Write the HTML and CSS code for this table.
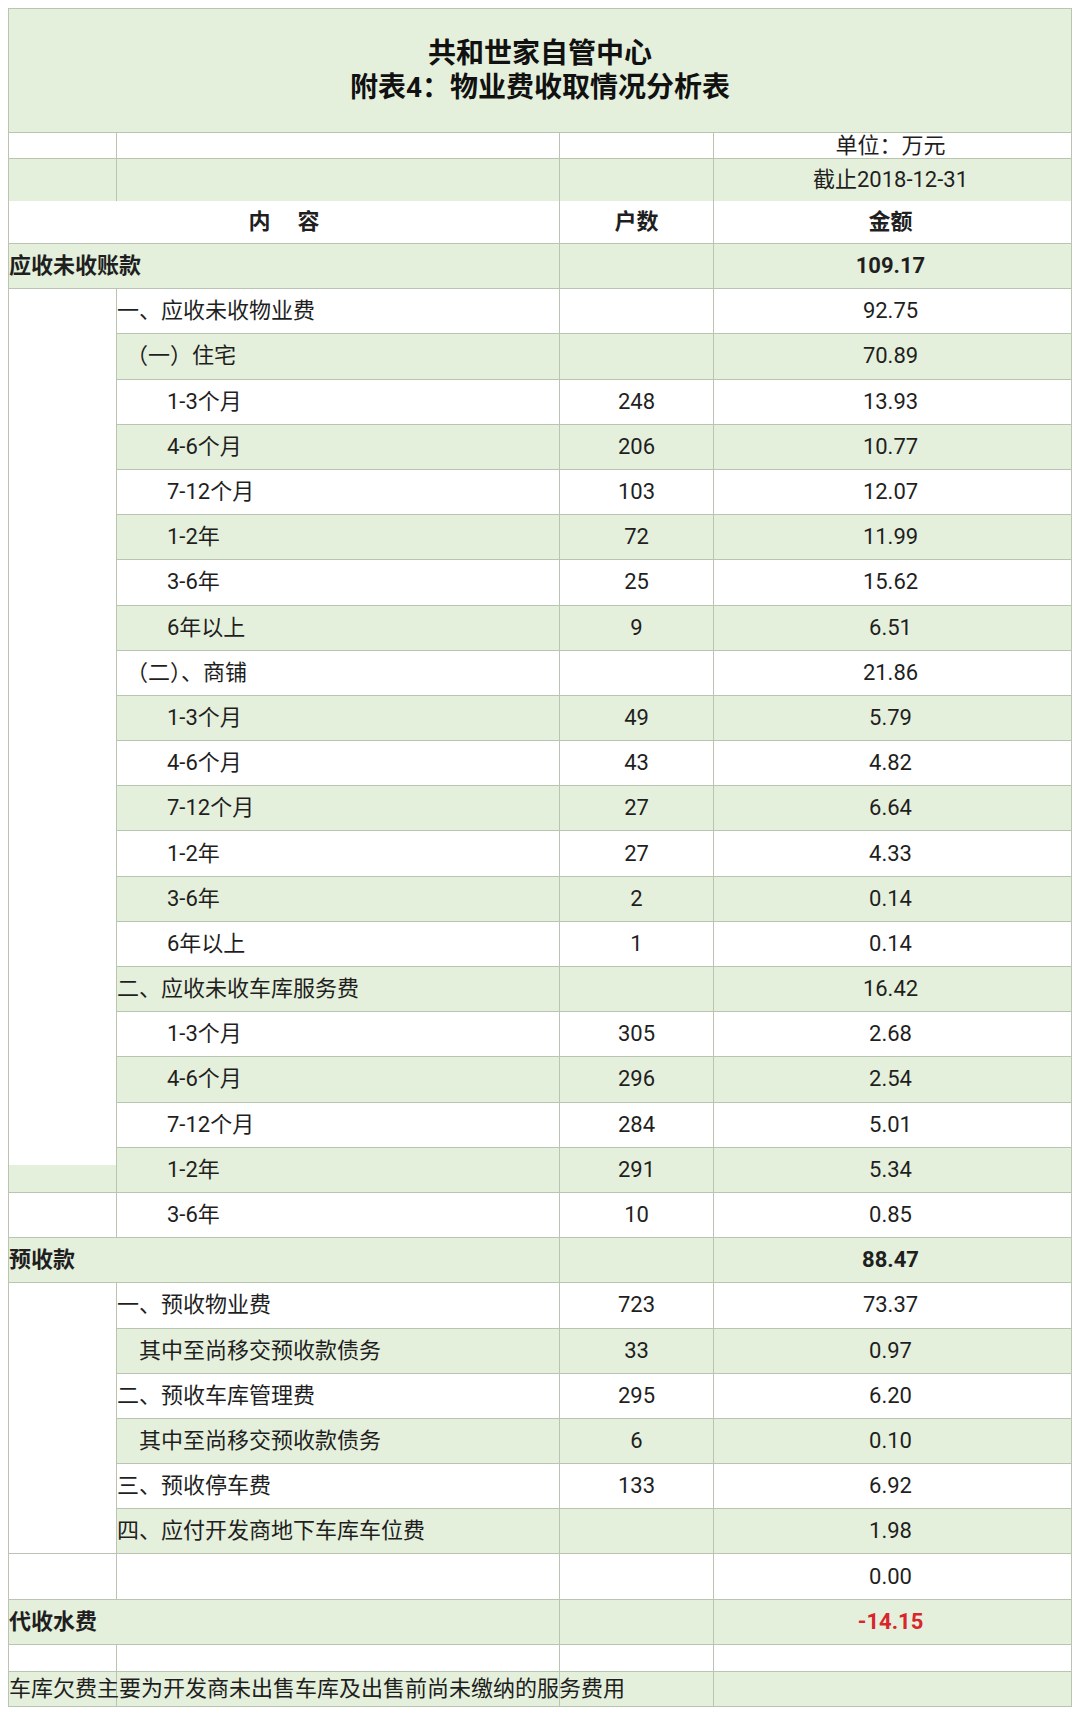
FILE: index.html
```html
<!DOCTYPE html>
<html lang="zh-CN">
<head>
<meta charset="utf-8">
<title>附表4：物业费收取情况分析表</title>
<link rel="stylesheet" href="styles.css">
</head>
<body>
<table class="sheet">
  <colgroup><col class="c0"><col class="c1"><col class="c2"><col class="c3"></colgroup>
  <tr class="r-title g"><td class="title" colspan="4">共和世家自管中心<br>附表4：物业费收取情况分析表</td></tr>
  <tr class="r-unit"><td></td><td></td><td></td><td class="n amt">单位：万元</td></tr>
  <tr class="r-date g"><td></td><td></td><td></td><td class="n amt">截止2018-12-31</td></tr>
  <tr class="r-head"><td class="hd" colspan="2"><span class="hd-a">内</span><span class="hd-b">容</span></td><td class="n hd">户数</td><td class="n hd amt">金额</td></tr>

  <tr class="r g"><td class="lbl b" colspan="2">应收未收账款</td><td class="n"></td><td class="n amt b">109.17</td></tr>
  <tr class="r"><td class="side side-tail" rowspan="20"></td><td class="lbl l1">一、应收未收物业费</td><td class="n"></td><td class="n amt">92.75</td></tr>
  <tr class="r g"><td class="lbl lp">（一）住宅</td><td class="n"></td><td class="n amt">70.89</td></tr>
  <tr class="r"><td class="lbl l3">1-3个月</td><td class="n">248</td><td class="n amt">13.93</td></tr>
  <tr class="r g"><td class="lbl l3">4-6个月</td><td class="n">206</td><td class="n amt">10.77</td></tr>
  <tr class="r"><td class="lbl l3">7-12个月</td><td class="n">103</td><td class="n amt">12.07</td></tr>
  <tr class="r g"><td class="lbl l3">1-2年</td><td class="n">72</td><td class="n amt">11.99</td></tr>
  <tr class="r"><td class="lbl l3">3-6年</td><td class="n">25</td><td class="n amt">15.62</td></tr>
  <tr class="r g"><td class="lbl l3">6年以上</td><td class="n">9</td><td class="n amt">6.51</td></tr>
  <tr class="r"><td class="lbl lp">（二）、商铺</td><td class="n"></td><td class="n amt">21.86</td></tr>
  <tr class="r g"><td class="lbl l3">1-3个月</td><td class="n">49</td><td class="n amt">5.79</td></tr>
  <tr class="r"><td class="lbl l3">4-6个月</td><td class="n">43</td><td class="n amt">4.82</td></tr>
  <tr class="r g"><td class="lbl l3">7-12个月</td><td class="n">27</td><td class="n amt">6.64</td></tr>
  <tr class="r"><td class="lbl l3">1-2年</td><td class="n">27</td><td class="n amt">4.33</td></tr>
  <tr class="r g"><td class="lbl l3">3-6年</td><td class="n">2</td><td class="n amt">0.14</td></tr>
  <tr class="r"><td class="lbl l3">6年以上</td><td class="n">1</td><td class="n amt">0.14</td></tr>
  <tr class="r g"><td class="lbl l1">二、应收未收车库服务费</td><td class="n"></td><td class="n amt">16.42</td></tr>
  <tr class="r"><td class="lbl l3">1-3个月</td><td class="n">305</td><td class="n amt">2.68</td></tr>
  <tr class="r g"><td class="lbl l3">4-6个月</td><td class="n">296</td><td class="n amt">2.54</td></tr>
  <tr class="r"><td class="lbl l3">7-12个月</td><td class="n">284</td><td class="n amt">5.01</td></tr>
  <tr class="r g"><td class="lbl l3">1-2年</td><td class="n">291</td><td class="n amt">5.34</td></tr>
  <tr class="r"><td class="side"></td><td class="lbl l3">3-6年</td><td class="n">10</td><td class="n amt">0.85</td></tr>

  <tr class="r g"><td class="lbl b" colspan="2">预收款</td><td class="n"></td><td class="n amt b">88.47</td></tr>
  <tr class="r"><td class="side" rowspan="6"></td><td class="lbl l1">一、预收物业费</td><td class="n">723</td><td class="n amt">73.37</td></tr>
  <tr class="r g"><td class="lbl l2">其中至尚移交预收款债务</td><td class="n">33</td><td class="n amt">0.97</td></tr>
  <tr class="r"><td class="lbl l1">二、预收车库管理费</td><td class="n">295</td><td class="n amt">6.20</td></tr>
  <tr class="r g"><td class="lbl l2">其中至尚移交预收款债务</td><td class="n">6</td><td class="n amt">0.10</td></tr>
  <tr class="r"><td class="lbl l1">三、预收停车费</td><td class="n">133</td><td class="n amt">6.92</td></tr>
  <tr class="r g"><td class="lbl l1">四、应付开发商地下车库车位费</td><td class="n"></td><td class="n amt">1.98</td></tr>
  <tr class="r"><td class="side"></td><td class="lbl"></td><td class="n"></td><td class="n amt">0.00</td></tr>

  <tr class="r g"><td class="lbl b" colspan="2">代收水费</td><td class="n"></td><td class="n amt b neg">-14.15</td></tr>
  <tr class="r-gap"><td></td><td></td><td></td><td></td></tr>
  <tr class="r-note g"><td class="lbl note">车库欠费主要为开发商未出售车库及出售前尚未缴纳的服务费用</td><td></td><td></td><td></td></tr>
</table>
</body>
</html>
```

FILE: styles.css
```css
* { box-sizing: border-box; }

html, body {
  margin: 0;
  padding: 0;
  background: #ffffff;
}

body {
  padding: 8px;
  font-family: Roboto, "Noto Sans CJK SC", sans-serif;
  color: #1f1f1f;
}

.sheet {
  border-collapse: separate;
  border-spacing: 0;
  table-layout: fixed;
  width: 1064px;
  border-left: 1px solid #b9c4b3;
  border-top: 1px solid #b9c4b3;
  font-size: 22px;
}

col.c0 { width: 108px; }
col.c1 { width: 443px; }
col.c2 { width: 154px; }
col.c3 { width: 358px; }

.sheet td {
  border-right: 1px solid #b9c4b3;
  border-bottom: 1px solid #b9c4b3;
  padding: 0;
  vertical-align: middle;
  white-space: nowrap;
  overflow: visible;
  line-height: 1;
}

.g { background: #e5f0dc; }

.r-title { height: 124px; }
.r-unit { height: 26px; }
.r-date { height: 42px; }
.sheet .r-date td { border-bottom: 0; }
.r-head { height: 43px; }
.r { height: 45.19px; }
.r-gap { height: 27px; }
.r-note { height: 35px; }

.sheet .title {
  text-align: center;
  font-size: 28px;
  font-weight: 700;
  line-height: 34px;
  color: #111111;
}

.n { text-align: center; }
.sheet .amt { padding-right: 4px; }

.hd {
  text-align: center;
  font-weight: 700;
}
.hd-a { margin-right: 27px; }

.lbl { text-align: left; }
.b { font-weight: 700; }
.neg { color: #d8262c; }

.sheet .l1 { padding-left: 0; }
.sheet .lp { padding-left: 9px; }
.sheet .l2 { padding-left: 22px; }
.sheet .l3 { padding-left: 50px; }

.side { background: #ffffff; }
.side-tail {
  background: linear-gradient(to bottom, #ffffff calc(100% - 27px), #e5f0dc calc(100% - 27px));
}

.note { overflow: visible; }
```
